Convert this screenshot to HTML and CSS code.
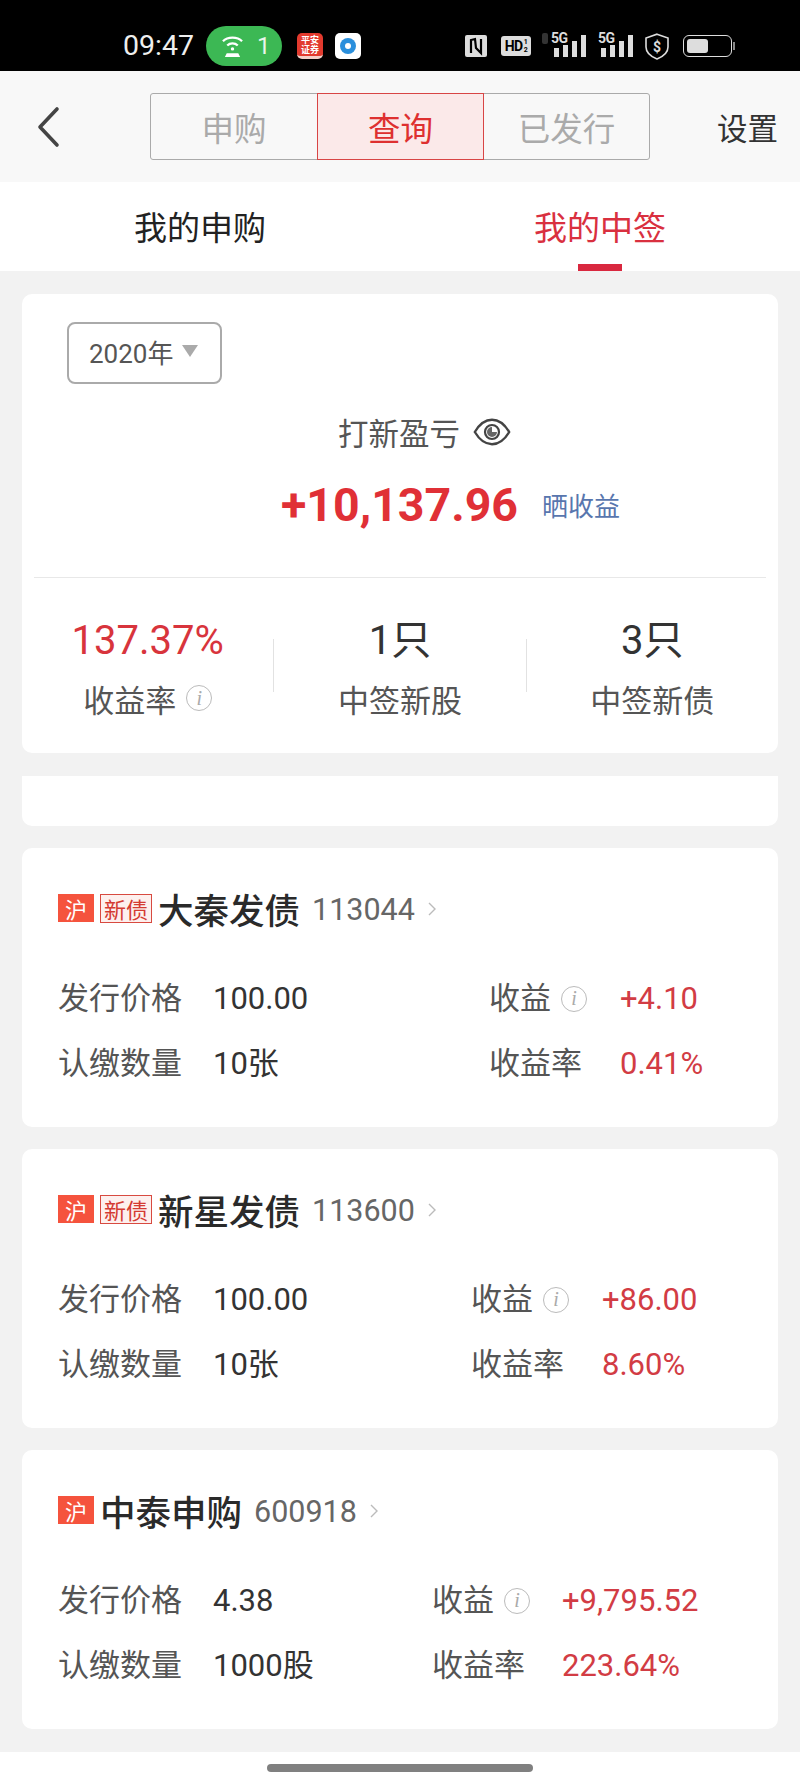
FILE: index.html
```html
<!DOCTYPE html>
<html lang="zh-CN">
<head>
<meta charset="utf-8">
<title>我的中签</title>
<link rel="stylesheet" href="styles.css">
</head>
<body>
<div class="page">
  <header class="status">
    <span class="time">09:47</span>
    <span class="pill">
      <svg class="pill-icon" viewBox="0 0 22 24"><path d="M1 6.500 C6 1.500 16 1.500 21 6.500" fill="none" stroke="#fff" stroke-width="2.400"/><path d="M5.500 11 C8.500 8 13.500 8 16.500 11" fill="none" stroke="#fff" stroke-width="2.400"/><circle cx="11" cy="14.500" r="1.800" fill="#fff"/><path d="M5 19 H17 L19 23 H3 Z" fill="#fff"/></svg>
      <span class="pill-num">1</span>
    </span>
    <span class="app app-red">平安<br>证券</span>
    <span class="app app-white"><svg viewBox="0 0 26 26" class="app-disc"><circle cx="13" cy="13" r="8" fill="#2a8fdc"/><circle cx="13" cy="13" r="3" fill="#fff"/></svg></span>
    <span class="status-right">
      <svg class="nfc" viewBox="0 0 22 22"><rect width="22" height="22" rx="2" fill="#ddd"/><path d="M6 18 V5 L10 4 L11 13 L16 18 V4" fill="none" stroke="#000" stroke-width="2.200"/></svg>
      <span class="hd">HD<span class="hd-frac">1<br>2</span></span>
      <span class="signal signal-first">
        <span class="arrows"></span>
        <span class="five-g">5G</span>
        <span class="bars"><i class="b1"></i><i class="b2"></i><i class="b3"></i><i class="b4"></i></span>
      </span>
      <span class="signal">
        <span class="five-g">5G</span>
        <span class="bars"><i class="b1"></i><i class="b2"></i><i class="b3"></i><i class="b4"></i></span>
      </span>
      <svg class="shield" viewBox="0 0 24 27"><path d="M12 1.200 L23 5 V14 C23 20 17 24 12 26 C7 24 1 20 1 14 V5 Z" fill="none" stroke="#ddd" stroke-width="1.600"/><text x="12" y="18.500" text-anchor="middle" class="shield-s">$</text></svg>
      <span class="battery"><span class="battery-fill"></span></span>
    </span>
  </header>

  <nav class="nav">
    <svg class="back" viewBox="0 0 24 42"><path d="M21 3 L4 21 L21 39" fill="none" stroke="#444" stroke-width="3.600" stroke-linecap="round" stroke-linejoin="round"/></svg>
    <div class="seg">
      <span class="seg-item seg-a">申购</span>
      <span class="seg-item seg-b seg-on">查询</span>
      <span class="seg-item seg-c">已发行</span>
    </div>
    <span class="settings">设置</span>
  </nav>

  <div class="tabs">
    <span class="tab">我的申购</span>
    <span class="tab tab-on">我的中签</span>
  </div>

  <main class="content">
    <section class="summary">
      <div class="year">2020年<span class="caret"></span></div>
      <div class="pl-title">打新盈亏
        <svg class="eye" viewBox="0 0 38 28"><path d="M1.800 14 C6 7 12 1.800 19 1.800 C26 1.800 32 7 36.200 14 C32 21 26 26.200 19 26.200 C12 26.200 6 21 1.800 14 Z" fill="none" stroke="#444" stroke-width="2.400"/><circle cx="19" cy="14" r="7" fill="none" stroke="#444" stroke-width="2.200"/><path d="M19 9 A5 5 0 1 0 24 14 L19 14 Z" fill="#666"/></svg>
      </div>
      <div class="pl-value"><span class="pl-num">+10,137.96</span><span class="pl-share">晒收益</span></div>
      <div class="summary-line"></div>
      <div class="stats">
        <div class="stat"><div class="stat-num stat-red">137.37%</div><div class="stat-label">收益率<span class="info info-stat">i</span></div></div>
        <span class="stat-sep"></span>
        <div class="stat"><div class="stat-num">1只</div><div class="stat-label">中签新股</div></div>
        <span class="stat-sep"></span>
        <div class="stat"><div class="stat-num">3只</div><div class="stat-label">中签新债</div></div>
      </div>
    </section>

    <div class="clipped"></div>

    <section class="card">
      <div class="card-title"><span class="tag-hu">沪</span><span class="tag-new">新债</span><span class="name">大秦发债</span><span class="code">113044</span><svg class="chev" viewBox="0 0 8 14"><path d="M1 1 L7 7 L1 13" fill="none" stroke="#bbb" stroke-width="1.400"/></svg></div>
      <div class="grid grid-a">
        <span class="lab">发行价格</span><span class="val">100.00</span><span class="lab">收益<span class="info">i</span></span><span class="val val-red">+4.10</span>
        <span class="lab">认缴数量</span><span class="val">10张</span><span class="lab">收益率</span><span class="val val-red">0.41%</span>
      </div>
    </section>

    <section class="card">
      <div class="card-title"><span class="tag-hu">沪</span><span class="tag-new">新债</span><span class="name">新星发债</span><span class="code">113600</span><svg class="chev" viewBox="0 0 8 14"><path d="M1 1 L7 7 L1 13" fill="none" stroke="#bbb" stroke-width="1.400"/></svg></div>
      <div class="grid grid-b">
        <span class="lab">发行价格</span><span class="val">100.00</span><span class="lab">收益<span class="info">i</span></span><span class="val val-red">+86.00</span>
        <span class="lab">认缴数量</span><span class="val">10张</span><span class="lab">收益率</span><span class="val val-red">8.60%</span>
      </div>
    </section>

    <section class="card">
      <div class="card-title"><span class="tag-hu">沪</span><span class="name name-solo">中泰申购</span><span class="code">600918</span><svg class="chev" viewBox="0 0 8 14"><path d="M1 1 L7 7 L1 13" fill="none" stroke="#bbb" stroke-width="1.400"/></svg></div>
      <div class="grid grid-c">
        <span class="lab">发行价格</span><span class="val">4.38</span><span class="lab">收益<span class="info">i</span></span><span class="val val-red">+9,795.52</span>
        <span class="lab">认缴数量</span><span class="val">1000股</span><span class="lab">收益率</span><span class="val val-red">223.64%</span>
      </div>
    </section>
  </main>

  <footer class="home"><span class="home-bar"></span></footer>
</div>
</body>
</html>
```
FILE: styles.css
```css
* { box-sizing: border-box; }
html, body { margin: 0; padding: 0; }
body {
  width: 800px;
  height: 1787px;
  overflow: hidden;
  font-family: Roboto, "Noto Sans CJK SC", sans-serif;
  background: #fff;
}
.page { width: 800px; height: 1787px; display: flex; flex-direction: column; }

/* status bar */
.status {
  height: 71px;
  background: #000;
  color: #eee;
  display: flex;
  align-items: center;
  padding: 21px 0 0 123px;
}
.time { font-size: 28.500px; width: 83px; margin-top: -2px; white-space: nowrap; }
.pill {
  width: 76px; height: 40px; border-radius: 20px; background: #3cb854;
  display: flex; align-items: center; padding-left: 16px; gap: 14px;
}
.pill-icon { width: 21px; height: 23px; }
.pill-num { font-size: 24px; color: #e8f5ea; }
.app {
  width: 26px; height: 26px; border-radius: 5px; display: flex; align-items: center; justify-content: center;
}
.app-red {
  margin-left: 15px; background: #e23a2e; color: #fff; font-size: 9px; line-height: 10px; text-align: center;
  font-weight: 700; border-bottom: 3px solid #f3d0c8;
}
.app-white { margin-left: 12px; background: #fff; }
.app-disc { width: 26px; height: 26px; }
.status-right { display: flex; align-items: center; margin-left: 104px; height: 30px; }
.nfc { width: 22px; height: 22px; }
.hd {
  margin-left: 14px; width: 30px; height: 20px; background: #ddd; color: #000; border-radius: 3px;
  font-size: 14px; font-weight: 700; line-height: 20px; display: flex; align-items: center; justify-content: center;
  letter-spacing: -.5px;
}
.hd-frac { font-size: 7px; line-height: 8px; margin-left: 1px; }
.signal { position: relative; width: 32px; height: 22px; margin-left: 15px; display: block; }
.signal-first { margin-left: 23px; }
.five-g { position: absolute; left: -3px; top: -4px; font-size: 14px; font-weight: 700; line-height: 14px; letter-spacing: -.5px; color: #ddd; }
.arrows { position: absolute; left: -12px; top: -2px; width: 6px; height: 11px; background: #333; border-radius: 2px; }
.bars { position: absolute; left: 0; bottom: 0; display: flex; align-items: flex-end; gap: 4px; }
.bars i { display: block; width: 5px; background: #ddd; }
.b1 { height: 9px; }
.b2 { height: 12px; }
.b3 { height: 16px; }
.b4 { height: 22px; }
.shield { width: 24px; height: 27px; margin-left: 12px; }
.shield-s { font-size: 14px; font-weight: 700; fill: #ddd; font-family: Roboto, sans-serif; }
.battery {
  width: 49px; height: 22px; margin-left: 14px; border: 1.500px solid #ddd; border-radius: 6px; padding: 2.500px;
  display: block; position: relative;
}
.battery::after { content: ""; position: absolute; right: -4px; top: 6px; width: 2px; height: 8px; background: #888; }
.battery-fill { display: block; width: 21px; height: 14px; background: #ddd; border-radius: 3px; }

/* nav */
.nav {
  height: 111px; background: #f8f8f8; display: flex; align-items: center; padding: 0 22px 0 36px;
}
.back { width: 24px; height: 42px; }
.seg {
  margin-left: 90px; width: 500px; height: 67px; display: flex;
  border: 1px solid #aaa; border-radius: 3px;
}
.seg-item {
  display: flex; align-items: center; justify-content: center; font-size: 32.500px; color: #aaa; width: 166px;
}
.seg-on { width: 167px; margin: -1px 0; background: #fbe9e9; border: 1px solid #d84545; color: #de3030; }
.seg-c { flex: 1; width: auto; }
.settings { margin-left: auto; font-size: 30.500px; color: #333; }

/* tabs */
.tabs { height: 89px; background: #fff; display: flex; }
.tab {
  flex: 1; display: flex; align-items: center; justify-content: center; font-size: 33px; color: #222;
  padding-bottom: 1px; position: relative;
}
.tab-on { color: #d9303f; }
.tab-on::after {
  content: ""; position: absolute; left: 178px; bottom: 0; width: 44px; height: 7px; background: #d9283f;
}

/* content */
.content { flex: 1; background: #f2f2f2; padding: 23px 22px; display: flex; flex-direction: column; }
.summary { height: 459px; background: #fff; border-radius: 10px; padding-top: 28px; }
.year {
  margin-left: 45px; width: 155px; height: 62px; border: 2px solid #aaa; border-radius: 8px;
  display: flex; align-items: center; padding: 0 0 3px 20px; font-size: 26px; color: #555;
}
.caret {
  margin-left: 9px; margin-top: -2px; width: 0; height: 0;
  border-left: 8px solid transparent; border-right: 8px solid transparent; border-top: 12px solid #aaa;
}
.pl-title {
  margin-top: 28px; height: 40px; padding-left: 316px; display: flex; align-items: center; font-size: 30.500px; color: #555;
  gap: 13px;
}
.eye { width: 38px; height: 28px; }
.pl-value { margin-top: 25px; height: 60px; padding-left: 259px; display: flex; align-items: center; }
.pl-num { font-size: 46.500px; font-weight: 700; color: #e03036; width: 261px; line-height: 56px; margin-top: -4px; }
.pl-share { font-size: 26px; color: #5876ae; margin-top: -6px; }
.summary-line { margin: 40px 12px 0; height: 1px; background: #e8e8e8; }
.stats { margin-top: 38px; display: flex; align-items: flex-start; }
.stat { flex: 1; text-align: center; }
.stat-num { height: 50px; line-height: 50px; font-size: 40px; color: #333; }
.stat-red { color: #d8343c; }
.stat-label {
  margin-top: 12px; height: 40px; display: flex; align-items: center; justify-content: center; font-size: 31px; color: #555;
}
.stat-sep { width: 1px; height: 53px; margin-top: 23px; background: #e2e2e2; }
.info {
  display: inline-flex; align-items: center; justify-content: center; flex: none;
  width: 26px; height: 26px; margin-left: 10px; border: 1.500px solid #bbb; border-radius: 50%;
  font: italic 20px "Liberation Serif", serif; color: #aaa;
}
.info-stat { margin-left: 10px; }

.clipped { margin-top: 23px; height: 50px; background: #fff; border-radius: 0 0 10px 10px; flex: none; }

.card {
  margin-top: 22px; height: 279px; flex: none; background: #fff; border-radius: 10px; padding: 36px 36px 0;
}
.card-title { height: 48px; display: flex; align-items: center; }
.tag-hu {
  width: 36px; height: 28px; background: #f5533d; color: #fff; font-size: 22px; display: flex; align-items: center; justify-content: center;
}
.tag-new {
  margin-left: 6px; width: 52px; height: 29px; background: #fdf0ee; border: 1px solid #d84a40; color: #d43b32; font-size: 22px;
  display: flex; align-items: center; justify-content: center; white-space: nowrap;
}
.name { margin-left: 6px; font-size: 35.500px; color: #2a2a2a; font-weight: 500; }
.name-solo { margin-left: 6px; }
.code { margin-left: 12px; font-size: 30.500px; color: #666; margin-top: 2px; }
.chev { margin-left: 13px; width: 8px; height: 14px; margin-top: 2px; }
.grid { margin-top: 34px; display: grid; grid-auto-rows: 65px; align-items: center; }
.grid-a { grid-template-columns: 155px 276px 131px auto; }
.grid-b { grid-template-columns: 155px 258px 131px auto; }
.grid-c { grid-template-columns: 155px 219px 130px auto; }
.lab { font-size: 31px; line-height: 40px; color: #555; display: flex; align-items: center; white-space: nowrap; }
.val { font-size: 31px; line-height: 40px; color: #333; white-space: nowrap; }
.val-red { color: #d23c44; }

/* home indicator */
.home { height: 35px; background: #fff; flex: none; padding-top: 12px; display: flex; justify-content: center; align-items: flex-start; }
.home-bar { width: 266px; height: 8px; border-radius: 4px; background: #808080; }
```
